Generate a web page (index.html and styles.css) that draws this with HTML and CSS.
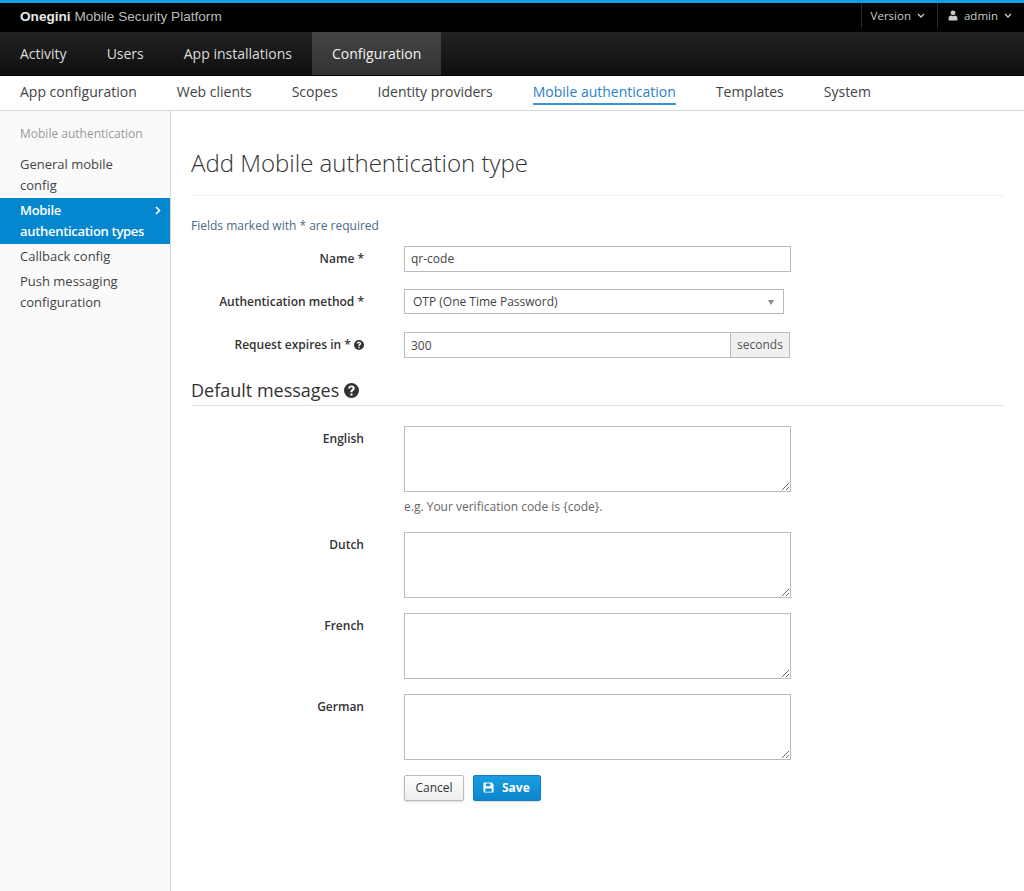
FILE: index.html
```html
<!DOCTYPE html>
<html lang="en">
<head>
  <meta charset="UTF-8">
  <title>Add Mobile authentication type</title>
  <link rel="stylesheet" href="styles.css">
</head>
<body>
  <header class="topbar">
    <div class="brand"><b>Onegini</b> Mobile Security Platform</div>
    <div class="topmenu">
      <span class="topitem">Version <svg class="caret" viewBox="0 0 8 5"><path d="M1 1l3 3 3-3" fill="none" stroke="currentColor" stroke-width="1.3"/></svg></span>
      <span class="topitem">
        <svg class="user" viewBox="0 0 10 11"><circle cx="5" cy="2.8" r="2.4" fill="currentColor"/><path d="M0.6 10.5V8.2C0.6 6.6 2 5.8 3 5.6 3.6 6 4.3 6.2 5 6.2S6.4 6 7 5.6C8 5.8 9.4 6.6 9.4 8.2V10.5Z" fill="currentColor"/></svg>
        admin <svg class="caret" viewBox="0 0 8 5"><path d="M1 1l3 3 3-3" fill="none" stroke="currentColor" stroke-width="1.3"/></svg>
      </span>
    </div>
  </header>
  <nav class="mainnav">
    <a>Activity</a>
    <a>Users</a>
    <a>App installations</a>
    <a class="active">Configuration</a>
  </nav>
  <nav class="subnav">
    <a>App configuration</a>
    <a>Web clients</a>
    <a>Scopes</a>
    <a>Identity providers</a>
    <a class="active">Mobile authentication</a>
    <a>Templates</a>
    <a>System</a>
  </nav>
  <div class="page">
    <aside class="sidebar">
      <div class="side-title">Mobile authentication</div>
      <a class="side-link">General mobile config</a>
      <a class="side-link selected">Mobile<br>authentication types
        <svg class="chev" viewBox="0 0 6 9"><path d="M1 1l3.5 3.5L1 8" fill="none" stroke="currentColor" stroke-width="1.6"/></svg>
      </a>
      <a class="side-link">Callback config</a>
      <a class="side-link">Push messaging configuration</a>
    </aside>
    <main class="content">
      <h1>Add Mobile authentication type</h1>
      <p class="required-note">Fields marked with * are required</p>
      <form>
        <div class="row name-row">
          <label>Name *</label>
          <input class="field" type="text" value="qr-code">
        </div>
        <div class="row method-row">
          <label>Authentication method *</label>
          <div class="select">OTP (One Time Password)<span class="arrow"></span></div>
        </div>
        <div class="row expires-row">
          <label>Request expires in * <svg class="help" viewBox="0 0 16 16"><use href="#q"/></svg></label>
          <div class="group">
            <input class="field" type="text" value="300">
            <span class="addon">seconds</span>
          </div>
        </div>
        <h2>Default messages <svg class="help big" viewBox="0 0 16 16"><use href="#q"/></svg></h2>
        <div class="row msg-row">
          <label>English</label>
          <div class="msg">
            <textarea></textarea>
            <p class="hint">e.g. Your verification code is {code}.</p>
          </div>
        </div>
        <div class="row msg-row">
          <label>Dutch</label>
          <div class="msg"><textarea></textarea></div>
        </div>
        <div class="row msg-row">
          <label>French</label>
          <div class="msg"><textarea></textarea></div>
        </div>
        <div class="row msg-row">
          <label>German</label>
          <div class="msg"><textarea></textarea></div>
        </div>
        <div class="actions">
          <button type="button" class="btn">Cancel</button>
          <button type="button" class="btn primary">
            <svg class="disk" viewBox="0 0 12 12"><path fill-rule="evenodd" d="M1.5 0.5H9.5L11.5 2.5V10.5A1 1 0 0 1 10.5 11.5H1.5A1 1 0 0 1 0.5 10.5V1.5A1 1 0 0 1 1.5 0.5ZM3 1.5V4.5H8V1.5ZM2.5 7V10.5H9.5V7Z" fill="currentColor"/></svg>
            Save
          </button>
        </div>
      </form>
    </main>
  </div>
  <svg width="0" height="0" class="defs">
    <symbol id="q" viewBox="0 0 16 16">
      <path fill-rule="evenodd" fill="currentColor" d="M8 0a8 8 0 1 1 0 16A8 8 0 0 1 8 0ZM6.9 11.2v2.1h2.2v-2.1ZM8 2.7c-2 0-3.4 1-3.6 2.9l2.1.4c.1-.9.6-1.4 1.4-1.4.8 0 1.3.4 1.3 1 0 .5-.3.8-1 1.3-.9.6-1.3 1.2-1.3 2.2v.8h2.1v-.5c0-.5.2-.8.9-1.2 1-.7 1.5-1.4 1.5-2.6 0-1.9-1.4-3-3.4-3Z"/>
    </symbol>
  </svg>
</body>
</html>
```
FILE: styles.css
```css
* {
  box-sizing: border-box;
}
html, body {
  height: 100%;
}
body {
  margin: 0;
  display: flex;
  flex-direction: column;
  font-family: "Open Sans", sans-serif;
  font-size: 13px;
  color: #333;
  background: #fff;
}
.defs {
  position: absolute;
}

.topbar {
  height: 32px;
  flex: none;
  display: flex;
  justify-content: space-between;
  background: #000;
  border-top: 3px solid #0ba1e2;
  color: #ccc;
}
.brand {
  padding-left: 20px;
  font-family: "Liberation Sans", sans-serif;
  font-size: 13.6px;
  line-height: 28px;
  color: #bbb;
}
.brand b {
  color: #e8e8e8;
}
.topmenu {
  display: flex;
  height: 25px;
}
.topitem {
  display: flex;
  align-items: center;
  gap: 6px;
  padding: 0 12px 0 9px;
  border-left: 1px solid #2a2a2a;
  font-size: 11.5px;
  color: #ccc;
}
.topitem + .topitem {
  padding-left: 10px;
}
.caret {
  width: 8px;
  height: 5px;
}
.user {
  width: 10px;
  height: 11px;
}

.mainnav {
  height: 44px;
  flex: none;
  display: flex;
  background: linear-gradient(#222, #0f0f0f);
  border-bottom: 1px solid #000;
}
.mainnav a {
  padding: 0 20px;
  line-height: 43px;
  font-size: 14px;
  color: #ddd;
}
.mainnav a.active {
  background: linear-gradient(#444, #333);
  color: #f2f2f2;
}

.subnav {
  height: 35px;
  flex: none;
  display: flex;
  gap: 40px;
  padding-left: 20px;
  background: #fff;
  border-bottom: 1px solid #d8d8d8;
}
.subnav a {
  height: 29px;
  line-height: 31px;
  font-size: 14px;
  color: #444;
}
.subnav a.active {
  color: #2a7fc9;
  border-bottom: 2px solid #3c92d8;
}

.page {
  flex: 1;
  display: flex;
}
.sidebar {
  width: 171px;
  flex: none;
  padding-top: 12px;
  background: #fafafa;
  border-right: 1px solid #d8d8d8;
}
.side-title {
  padding-left: 20px;
  font-size: 12px;
  line-height: 21px;
  margin-bottom: 8px;
  color: #999;
}
.side-link {
  display: block;
  position: relative;
  padding: 2px 20px;
  line-height: 21px;
  color: #444;
}
.side-link.selected {
  padding-right: 0;
  background: #0587cf;
  color: #fff;
  font-weight: 600;
  letter-spacing: -0.3px;
}
.chev {
  position: absolute;
  right: 9px;
  top: 8px;
  width: 6px;
  height: 9px;
}

.content {
  flex: 1;
  padding: 0 20px;
}
h1 {
  margin: 36px 0 0;
  padding-bottom: 16px;
  font-size: 24px;
  font-weight: 300;
  line-height: 32px;
  color: #333;
  border-bottom: 1px solid #eee;
}
.required-note {
  margin: 21px 0 0;
  line-height: 18px;
  font-size: 12px;
  color: #4a6a85;
}
.row {
  display: flex;
}
.row label {
  width: 173px;
  flex: none;
  margin-right: 40px;
  text-align: right;
  font-weight: 600;
  font-size: 12px;
  color: #333;
}
.name-row {
  margin-top: 11px;
  line-height: 26px;
}
.name-row label,
.method-row label,
.expires-row label {
  line-height: 26px;
}
.method-row {
  margin-top: 17px;
}
.expires-row {
  margin-top: 17px;
}
.field {
  width: 387px;
  height: 26px;
  padding: 0 6px;
  border: 1px solid #bbb;
  font: inherit;
  font-size: 12px;
  color: #444;
  outline: none;
}
.select {
  position: relative;
  width: 380px;
  height: 25px;
  padding: 0 8px;
  line-height: 23px;
  border: 1px solid #bbb;
  font-size: 12px;
  color: #444;
}
.arrow {
  position: absolute;
  right: 9px;
  top: 10px;
  border-top: 5px solid #888;
  border-left: 3px solid transparent;
  border-right: 3px solid transparent;
}
.group {
  display: flex;
}
.group .field {
  width: 327px;
}
.addon {
  width: 59px;
  height: 26px;
  line-height: 24px;
  text-align: center;
  font-size: 12px;
  color: #555;
  background: #f0f0f0;
  border: 1px solid #bbb;
  border-left: 0;
}
.help {
  width: 10px;
  height: 10px;
  vertical-align: -1px;
  color: #333;
}
.help.big {
  width: 15px;
  height: 15px;
  vertical-align: -1px;
}
h2 {
  margin: 21px 0 0;
  padding-bottom: 3px;
  font-size: 18px;
  font-weight: 400;
  line-height: 23px;
  color: #333;
  border-bottom: 1px solid #e2e2e2;
}
.msg-row {
  margin-top: 15px;
}
h2 + .msg-row {
  margin-top: 20px;
}
.msg-row label {
  padding-top: 4px;
  line-height: 18px;
}
.msg {
  width: 387px;
}
textarea {
  display: block;
  width: 387px;
  height: 66px;
  padding: 6px;
  border: 1px solid #bbb;
  font: inherit;
  outline: none;
  resize: vertical;
}
.hint {
  margin: 6px 0 1px;
  line-height: 18px;
  font-size: 12px;
  color: #666;
}
.actions {
  display: flex;
  gap: 9px;
  margin: 15px 0 0 213px;
}
.btn {
  width: 60px;
  height: 26px;
  padding: 0 0 2px;
  border: 1px solid #bbb;
  border-radius: 2px;
  background: linear-gradient(#fdfdfd, #eee);
  box-shadow: 0 1px 2px rgba(0, 0, 0, 0.15);
  font: inherit;
  font-size: 12px;
  color: #333;
}
.btn.primary {
  display: flex;
  align-items: center;
  gap: 8px;
  width: 68px;
  padding: 0 0 2px 9px;
  border-color: #0f7fc0;
  background: linear-gradient(#1a9de0, #0c85cc);
  color: #fff;
  font-weight: 700;
}
.disk {
  width: 11px;
  height: 11px;
}
```
